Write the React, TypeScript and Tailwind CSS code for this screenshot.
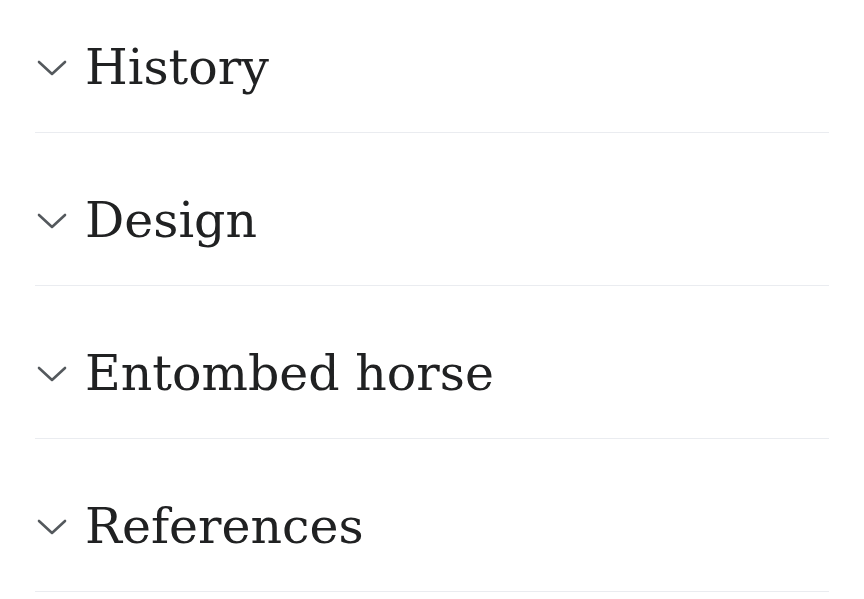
import React from "react";

const sections = ["History", "Design", "Entombed horse", "References"];

function Chevron() {
  return (
    <svg
      className="w-[36px] h-[34px] shrink-0 text-[#54595d]"
      viewBox="0 0 36 34"
      fill="none"
      stroke="currentColor"
      strokeWidth={2.6}
      strokeLinecap="round"
      strokeLinejoin="round"
    >
      <path d="M4 11l13 12 13-12" />
    </svg>
  );
}

export default function App() {
  return (
    <div className="min-h-screen bg-white px-[35px] font-['DejaVu_Serif',serif] text-[#202122]">
      {sections.map((s, i) => (
        <div
          key={s}
          className={`flex items-center gap-[14px] border-b border-[#eaecf0] pb-[32px] ${
            i === 0 ? "pt-[35px]" : "pt-[55px]"
          }`}
        >
          <Chevron />
          <h2 className="text-[49px] leading-[65px]">{s}</h2>
        </div>
      ))}
    </div>
  );
}
